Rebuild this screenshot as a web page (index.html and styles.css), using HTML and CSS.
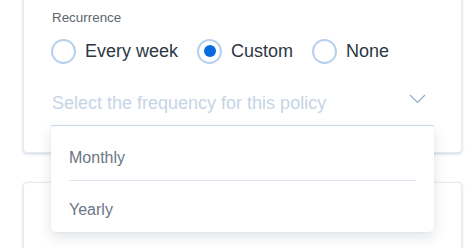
FILE: index.html
```html
<!DOCTYPE html>
<html lang="en">
<head>
<meta charset="utf-8">
<title>Recurrence</title>
<link rel="stylesheet" href="styles.css">
</head>
<body>
<div class="page">
  <section class="card card-top">
    <div class="field-label">Recurrence</div>
    <div class="radio-group">
      <label class="radio"><span class="radio-circle"></span><span class="radio-text">Every week</span></label>
      <label class="radio"><span class="radio-circle checked"><span class="radio-dot"></span></span><span class="radio-text">Custom</span></label>
      <label class="radio"><span class="radio-circle"></span><span class="radio-text">None</span></label>
    </div>
    <div class="select">
      <span class="select-placeholder">Select the frequency for this policy</span>
      <svg class="chevron" width="17" height="10" viewBox="0 0 17 10" aria-hidden="true">
        <polyline points="1,1 8.5,8.5 16,1" fill="none" stroke="#8ea9cd" stroke-width="1.1"/>
      </svg>
      <ul class="dropdown">
        <li class="option first">Monthly</li>
        <li class="option">Yearly</li>
      </ul>
    </div>
  </section>
  <section class="card card-bottom"></section>
</div>
</body>
</html>
```

FILE: styles.css
```css
html, body {
  margin: 0;
  padding: 0;
  background: #ffffff;
}

body {
  font-family: "Liberation Sans", Arial, sans-serif;
  width: 474px;
  height: 248px;
  overflow: hidden;
}

.page {
  padding: 0 12px 0 23px;
}

.card {
  background: #ffffff;
  border: 1px solid #e7ebf1;
  border-radius: 4px;
  box-shadow: 0 1px 3px rgba(70, 100, 150, 0.28);
  width: 383px;
  padding: 0 27px;
}

.card-top {
  margin-top: -20px;
  padding-top: 29px;
  padding-bottom: 26px;
  position: relative;
}

.card-bottom {
  margin-top: 29px;
  height: 70px;
}

.field-label {
  font-size: 13.4px;
  line-height: 16px;
  color: #5d6570;
  padding-left: 1px;
}

.radio-group {
  display: flex;
  align-items: center;
  height: 26px;
  margin-top: 12px;
  gap: 19px;
}

.radio {
  display: flex;
  align-items: center;
}

.radio-circle {
  box-sizing: border-box;
  width: 25px;
  height: 25px;
  border: 2px solid #b7d0ee;
  border-radius: 50%;
  display: flex;
  align-items: center;
  justify-content: center;
  background: #fff;
}

.radio-dot {
  width: 12px;
  height: 12px;
  border-radius: 50%;
  background: #0a6be0;
}

.radio-text {
  margin-left: 9px;
  font-size: 18px;
  line-height: 22px;
  color: #2c3745;
}

.select {
  position: relative;
  display: flex;
  align-items: flex-start;
  justify-content: space-between;
  margin-top: 29px;
  padding-bottom: 12px;
  border-bottom: 1px solid #d3e1f1;
}

.select-placeholder {
  font-size: 18px;
  line-height: 20px;
  color: #c6d4e5;
  padding-left: 1px;
}

.chevron {
  margin-top: 1px;
  margin-right: 8px;
}

.dropdown {
  position: absolute;
  top: calc(100% + 1px);
  left: 0;
  right: 0;
  margin: 0;
  list-style: none;
  background: #ffffff;
  border-radius: 5px;
  padding: 6px 18px 0;
  box-shadow: 0 5px 14px rgba(30, 45, 70, 0.13), 0 0 2px rgba(30, 45, 70, 0.08);
  z-index: 2;
}

.option {
  font-size: 16px;
  line-height: 20px;
  color: #6b7685;
  padding: 19px 0 12px;
}

.option.first {
  padding: 16px 0 12px;
  border-bottom: 1px solid #dde7f2;
}
```
